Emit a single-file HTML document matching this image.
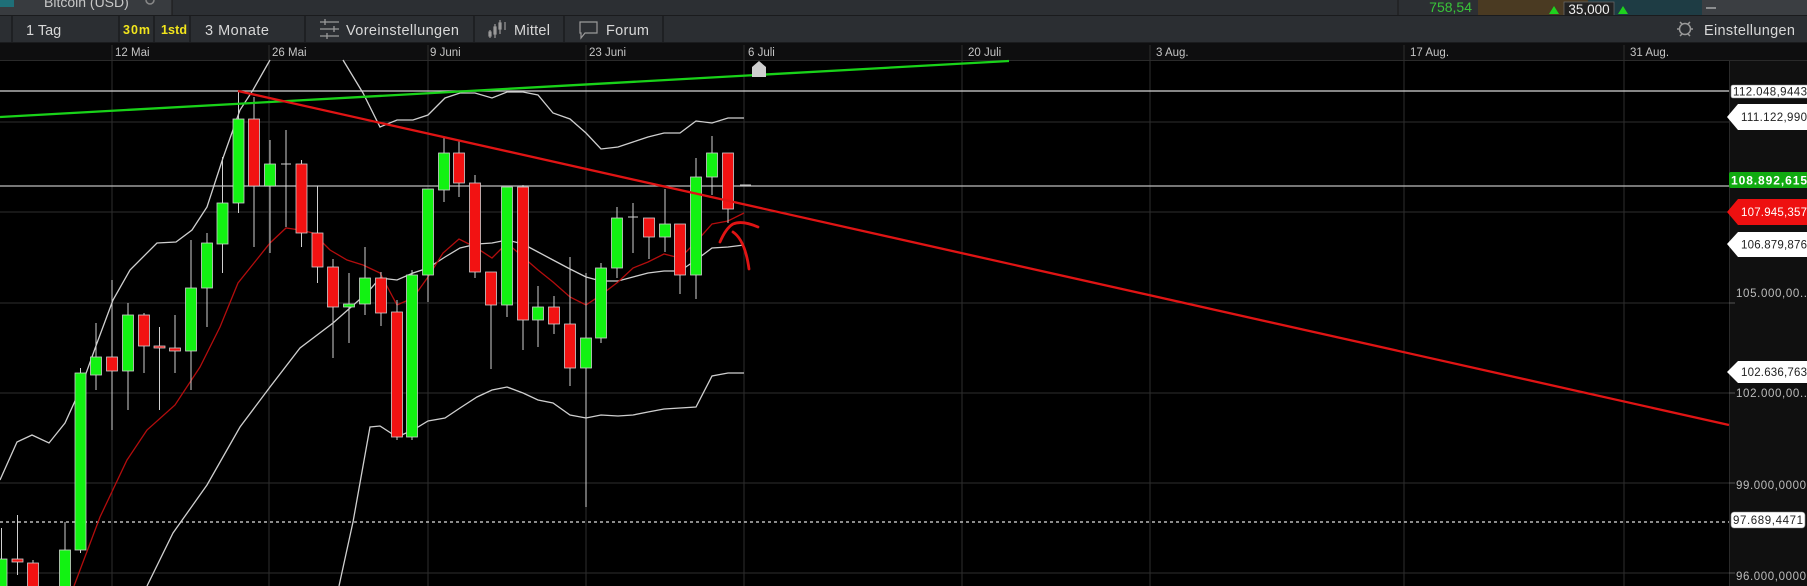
<!DOCTYPE html>
<html><head><meta charset="utf-8"><style>
html,body{margin:0;padding:0;background:#000;width:1807px;height:586px;overflow:hidden}
svg{display:block}
text{font-family:"Liberation Sans",sans-serif}
</style></head><body>
<svg width="1807" height="586" viewBox="0 0 1807 586" xmlns="http://www.w3.org/2000/svg">
<rect x="0" y="0" width="1807" height="586" fill="#000"/>
<rect x="0" y="0" width="1807" height="15" fill="#2c2f33"/>
<rect x="0" y="0" width="172" height="15" fill="#383b3f"/>
<rect x="0" y="0" width="14" height="7" fill="#1f6f78"/>
<text x="44" y="7" font-size="14" fill="#c8c8c8">Bitcoin (USD)</text>
<circle cx="150" cy="0" r="4" fill="none" stroke="#888" stroke-width="1.5"/>
<line x1="172" y1="0" x2="172" y2="15" stroke="#1a1a1a"/>
<line x1="1398" y1="0" x2="1398" y2="15" stroke="#1a1a1a"/>
<text x="1472" y="12" font-size="14" fill="#39c339" text-anchor="end">758,54</text>
<rect x="1478" y="0" width="110" height="15" fill="#4a3a22"/>
<rect x="1588" y="0" width="114" height="15" fill="#1e3c44"/>
<polygon points="1549,14 1554,6 1559,14" fill="#1fd11f"/>
<polygon points="1618,14 1623,6 1628,14" fill="#1fd11f"/>
<rect x="1564" y="2" width="50" height="14" fill="#222" stroke="#666" stroke-width="0.8"/>
<text x="1589" y="14" font-size="13.5" fill="#f0f0f0" text-anchor="middle">35,000</text>
<rect x="1702" y="0" width="105" height="15" fill="#3b3e42"/>
<line x1="1706" y1="8" x2="1716" y2="8" stroke="#ddd" stroke-width="1"/>
<rect x="0" y="15" width="1807" height="28" fill="#2b2e32"/>
<line x1="0" y1="15.5" x2="1807" y2="15.5" stroke="#1a1b1d"/>
<line x1="0" y1="42.5" x2="1807" y2="42.5" stroke="#1a1b1d"/>
<g stroke="#1b1c1e" stroke-width="1.5">
<line x1="12" y1="16" x2="12" y2="42"/><line x1="119" y1="16" x2="119" y2="42"/>
<line x1="154" y1="16" x2="154" y2="42"/><line x1="190" y1="16" x2="190" y2="42"/>
<line x1="305" y1="16" x2="305" y2="42"/><line x1="474" y1="16" x2="474" y2="42"/>
<line x1="564" y1="16" x2="564" y2="42"/><line x1="663" y1="16" x2="663" y2="42"/>
</g>
<text x="26" y="35" font-size="14.5" fill="#d8d8d8">1 Tag</text>
<text x="123" y="34" font-size="12.5" font-weight="bold" fill="#f2e51c" textLength="27">30m</text>
<text x="161" y="34" font-size="12.5" font-weight="bold" fill="#f2e51c" textLength="26">1std</text>
<text x="205" y="35" font-size="14.5" fill="#d8d8d8" textLength="64">3 Monate</text>
<g stroke="#9a9a9a" stroke-width="1.3">
<line x1="320" y1="22" x2="339" y2="22"/><line x1="320" y1="29" x2="339" y2="29"/><line x1="320" y1="36" x2="339" y2="36"/>
<line x1="325" y1="19" x2="325" y2="25"/><line x1="334" y1="26" x2="334" y2="32"/><line x1="327" y1="33" x2="327" y2="39"/>
</g>
<text x="346" y="35" font-size="14.5" fill="#d8d8d8" textLength="113">Voreinstellungen</text>
<g stroke="#9a9a9a" stroke-width="1.2" fill="none">
<line x1="490" y1="30" x2="490" y2="38"/><rect x="489" y="32" width="2" height="4"/>
<line x1="495" y1="24" x2="495" y2="38"/><rect x="494" y="27" width="2" height="7"/>
<line x1="500" y1="20" x2="500" y2="34"/><rect x="499" y="23" width="2" height="6"/>
<line x1="505" y1="22" x2="505" y2="30"/>
</g>
<text x="514" y="35" font-size="14.5" fill="#d8d8d8" textLength="36">Mittel</text>
<path d="M580 22 H597 V33 H585 L581 38 V33 H580 Z" fill="none" stroke="#9a9a9a" stroke-width="1.2"/>
<text x="606" y="35" font-size="14.5" fill="#d8d8d8" textLength="43">Forum</text>
<g stroke="#9a9a9a" stroke-width="1.5" fill="none">
<circle cx="1685" cy="29" r="5.5"/>
<line x1="1677" y1="29" x2="1679" y2="29"/><line x1="1691" y1="29" x2="1693" y2="29"/>
<line x1="1680" y1="22" x2="1682" y2="24"/><line x1="1690" y1="22" x2="1688" y2="24"/>
<line x1="1680" y1="36" x2="1682" y2="34"/><line x1="1690" y1="36" x2="1688" y2="34"/>
</g>
<text x="1704" y="35" font-size="14.5" fill="#d8d8d8" textLength="91">Einstellungen</text>
<rect x="0" y="43" width="1807" height="17" fill="#0e0e0f"/>
<line x1="0" y1="60.5" x2="1807" y2="60.5" stroke="#2a2a2a"/>
<g font-size="11.5" fill="#c4c4c4">
<text x="115" y="56">12 Mai</text><text x="272" y="56">26 Mai</text><text x="430" y="56">9 Juni</text>
<text x="589" y="56">23 Juni</text><text x="748" y="56">6 Juli</text><text x="968" y="56">20 Juli</text>
<text x="1156" y="56">3 Aug.</text><text x="1410" y="56">17 Aug.</text><text x="1630" y="56">31 Aug.</text>
</g>
<g stroke="#2e2e2e" stroke-width="1">
<line x1="112" y1="45" x2="112" y2="586"/><line x1="269" y1="45" x2="269" y2="586"/>
<line x1="428" y1="45" x2="428" y2="586"/><line x1="586" y1="45" x2="586" y2="586"/>
<line x1="744" y1="45" x2="744" y2="586"/><line x1="962" y1="45" x2="962" y2="586"/>
<line x1="1150" y1="45" x2="1150" y2="586"/><line x1="1404" y1="45" x2="1404" y2="586"/>
<line x1="1624" y1="45" x2="1624" y2="586"/>
<line x1="0" y1="122" x2="1729" y2="122"/><line x1="0" y1="212" x2="1729" y2="212"/>
<line x1="0" y1="303" x2="1729" y2="303"/><line x1="0" y1="393" x2="1729" y2="393"/>
<line x1="0" y1="483" x2="1729" y2="483"/><line x1="0" y1="573" x2="1729" y2="573"/>
</g>
<rect x="1729" y="61" width="78" height="525" fill="#101010"/>
<line x1="1729.5" y1="61" x2="1729.5" y2="586" stroke="#2a2a2a"/>
<line x1="0" y1="91" x2="1729" y2="91" stroke="#d6d6d6" stroke-width="1.3"/>
<line x1="0" y1="186" x2="1729" y2="186" stroke="#bdbdbd" stroke-width="1.2"/>
<line x1="0" y1="522" x2="1729" y2="522" stroke="#e0e0e0" stroke-width="1.2" stroke-dasharray="3,3"/>
<g fill="none" stroke-width="1.3">
<polyline stroke="#cfcfcf" points="0,480 17,442 32,435 49,443 65,423 80,390 97,343 113,300 130,270 157,243 176,242 192,230 207,207 223,158 240,110 253,90 270,60"/>
<polyline stroke="#cfcfcf" points="343,60 363,93 380,127 397,120 413,120 428,115 445,98 460,93 475,93 492,98 507,92 523,92 538,95 553,113 570,119 586,133 601,149 618,147 633,142 648,137 664,133 680,133 696,121 712,123 728,118 744,118"/>
<polyline stroke="#cfcfcf" points="147,586 173,533 207,485 240,427 270,387 300,348 333,323 367,293 380,278 397,280 413,273 428,268 445,257 460,248 477,244 492,243 507,240 523,244 538,252 553,260 570,269 586,277 601,281 618,281 633,277 648,273 664,271 680,271 696,260 712,248 728,247 744,245"/>
<polyline stroke="#cfcfcf" points="339,586 353,522 370,427 380,426 397,437 413,430 428,421 445,418 460,408 477,397 492,390 507,387 523,393 538,400 553,403 570,415 586,418 601,415 618,416 633,415 648,412 664,409 680,408 696,407 712,376 728,373 744,373"/>
<polyline stroke="#b30d0d" points="74,586 100,517 127,460 147,430 175,405 200,367 220,327 238,283 270,243 286,228 300,230 313,233 330,250 347,260 363,265 380,273 397,305 413,298 428,277 443,253 459,239 475,247 492,258 507,243 523,257 538,270 553,282 570,297 586,305 601,295 618,282 633,268 648,262 664,254 680,258 696,242 712,224 728,221 744,213"/>
</g>
<g stroke="#d0d0d0" stroke-width="1">
<line x1="1.5" y1="528" x2="1.5" y2="586"/><line x1="17.5" y1="515" x2="17.5" y2="575"/><line x1="33" y1="560" x2="33" y2="586"/>
<line x1="65" y1="522" x2="65" y2="586"/><line x1="80.5" y1="368" x2="80.5" y2="553"/><line x1="96" y1="323" x2="96" y2="390"/>
<line x1="112" y1="280" x2="112" y2="430"/><line x1="128" y1="303" x2="128" y2="410"/><line x1="144" y1="313" x2="144" y2="373"/>
<line x1="159.5" y1="327" x2="159.5" y2="410"/><line x1="175" y1="315" x2="175" y2="373"/><line x1="191" y1="240" x2="191" y2="390"/>
<line x1="207" y1="233" x2="207" y2="327"/><line x1="222.5" y1="157" x2="222.5" y2="273"/><line x1="238.5" y1="92" x2="238.5" y2="213"/>
<line x1="254" y1="97" x2="254" y2="247"/><line x1="270" y1="140" x2="270" y2="253"/><line x1="286" y1="130" x2="286" y2="227"/>
<line x1="301.5" y1="160" x2="301.5" y2="247"/><line x1="317.5" y1="186" x2="317.5" y2="283"/><line x1="333" y1="259" x2="333" y2="358"/>
<line x1="349" y1="273" x2="349" y2="343"/><line x1="365" y1="247" x2="365" y2="315"/><line x1="381" y1="272" x2="381" y2="326"/>
<line x1="397" y1="300" x2="397" y2="440"/><line x1="412" y1="270" x2="412" y2="440"/>
<line x1="428" y1="189" x2="428" y2="302"/><line x1="444" y1="137" x2="444" y2="202"/><line x1="459" y1="141" x2="459" y2="197"/>
<line x1="475" y1="175" x2="475" y2="278"/><line x1="491" y1="272" x2="491" y2="369"/><line x1="507" y1="187" x2="507" y2="317"/>
<line x1="523" y1="185" x2="523" y2="350"/><line x1="538" y1="286" x2="538" y2="347"/><line x1="554" y1="296" x2="554" y2="334"/>
<line x1="570" y1="257" x2="570" y2="386"/><line x1="586" y1="273" x2="586" y2="507"/><line x1="601" y1="263" x2="601" y2="343"/>
<line x1="617" y1="207" x2="617" y2="278"/><line x1="633" y1="203" x2="633" y2="253"/><line x1="649" y1="218" x2="649" y2="259"/>
<line x1="665" y1="189" x2="665" y2="252"/><line x1="680" y1="224" x2="680" y2="294"/><line x1="696" y1="158" x2="696" y2="299"/>
<line x1="712" y1="136" x2="712" y2="195"/><line x1="728" y1="153" x2="728" y2="223"/>
<line x1="740" y1="185" x2="751" y2="185"/>
<line x1="281" y1="164" x2="291" y2="164"/><line x1="628" y1="217" x2="638" y2="217"/>
</g>
<g stroke="#cfcfcf" stroke-width="0.8">
<rect x="-4" y="559" width="11" height="28" fill="#12f212"/>
<rect x="12" y="559" width="11" height="3" fill="#f21212"/>
<rect x="27.5" y="563" width="11" height="24" fill="#f21212"/>
<rect x="59.5" y="550" width="11" height="37" fill="#12f212"/>
<rect x="75" y="373" width="11" height="177" fill="#12f212"/>
<rect x="90.5" y="357" width="11" height="18" fill="#12f212"/>
<rect x="106.5" y="357" width="11" height="14" fill="#f21212"/>
<rect x="122.5" y="315" width="11" height="56" fill="#12f212"/>
<rect x="138.5" y="315" width="11" height="31" fill="#f21212"/>
<rect x="154" y="346" width="11" height="2" fill="#f21212"/>
<rect x="169.5" y="348" width="11" height="3" fill="#f21212"/>
<rect x="185.5" y="288" width="11" height="63" fill="#12f212"/>
<rect x="201.5" y="243" width="11" height="45" fill="#12f212"/>
<rect x="217" y="203" width="11" height="41" fill="#12f212"/>
<rect x="233" y="119" width="11" height="84" fill="#12f212"/>
<rect x="248.5" y="119" width="11" height="67" fill="#f21212"/>
<rect x="264.5" y="164" width="11" height="22" fill="#12f212"/>
<rect x="296" y="164" width="11" height="69" fill="#f21212"/>
<rect x="312" y="233" width="11" height="34" fill="#f21212"/>
<rect x="327.5" y="267" width="11" height="40" fill="#f21212"/>
<rect x="343.5" y="304" width="11" height="3" fill="#12f212"/>
<rect x="359.5" y="278" width="11" height="26" fill="#12f212"/>
<rect x="375.5" y="278" width="11" height="35" fill="#f21212"/>
<rect x="391.5" y="312" width="11" height="125" fill="#f21212"/>
<rect x="406.5" y="275" width="11" height="162" fill="#12f212"/>
<rect x="422.5" y="189" width="11" height="86" fill="#12f212"/>
<rect x="438.5" y="153" width="11" height="37" fill="#12f212"/>
<rect x="453.5" y="153" width="11" height="30" fill="#f21212"/>
<rect x="469.5" y="183" width="11" height="89" fill="#f21212"/>
<rect x="485.5" y="272" width="11" height="33" fill="#f21212"/>
<rect x="501.5" y="187" width="11" height="118" fill="#12f212"/>
<rect x="517.5" y="187" width="11" height="133" fill="#f21212"/>
<rect x="532.5" y="307" width="11" height="13" fill="#12f212"/>
<rect x="548.5" y="307" width="11" height="17" fill="#f21212"/>
<rect x="564.5" y="324" width="11" height="44" fill="#f21212"/>
<rect x="580.5" y="338" width="11" height="30" fill="#12f212"/>
<rect x="595.5" y="268" width="11" height="70" fill="#12f212"/>
<rect x="611.5" y="218" width="11" height="50" fill="#12f212"/>
<rect x="643.5" y="218" width="11" height="19" fill="#f21212"/>
<rect x="659.5" y="224" width="11" height="13" fill="#12f212"/>
<rect x="674.5" y="224" width="11" height="51" fill="#f21212"/>
<rect x="690.5" y="177" width="11" height="98" fill="#12f212"/>
<rect x="706.5" y="153" width="11" height="24" fill="#12f212"/>
<rect x="722.5" y="153" width="11" height="56" fill="#f21212"/>
</g>
<line x1="0" y1="117" x2="1009" y2="61" stroke="#19d219" stroke-width="2.3"/>
<line x1="238" y1="91" x2="1729" y2="425" stroke="#e01414" stroke-width="2.3"/>
<g fill="none" stroke="#e01414" stroke-width="2.8" stroke-linecap="round">
<path d="M720 242 Q726 228 733 224 Q742 220 758 227"/>
<path d="M733 232 Q745 240 749 269"/>
</g>
<path d="M752 77 V67 L759 61 L766 67 V77 Z" fill="#cfcfcf"/>
<g font-size="11.5" fill="#bdbdbd">
<line x1="1729" y1="303" x2="1735" y2="303" stroke="#555"/>
<line x1="1729" y1="393" x2="1735" y2="393" stroke="#555"/>
<line x1="1729" y1="483" x2="1735" y2="483" stroke="#555"/>
<line x1="1729" y1="573" x2="1735" y2="573" stroke="#555"/>
<text x="1736" y="297" textLength="71">105.000,00..</text>
<text x="1736" y="397" textLength="71">102.000,00..</text>
<text x="1736" y="489" textLength="70">99.000,0000</text>
<text x="1736" y="580" textLength="70">96.000,0000</text>
</g>
<rect x="1731" y="85" width="80" height="13" rx="2" fill="#fff" stroke="#888" stroke-width="0.6"/>
<text x="1733" y="95.5" font-size="11.5" fill="#222" textLength="74">112.048,9443</text>
<path d="M1727 117 L1738 104 H1807 V130 H1738 Z" fill="#fff"/>
<text x="1741" y="121" font-size="11.5" fill="#222" textLength="66">111.122,990</text>
<rect x="1729" y="172" width="80" height="16" rx="2" fill="#10aa10"/>
<text x="1731" y="184.5" font-size="12" font-weight="bold" fill="#fff" textLength="76">108.892,615</text>
<path d="M1727 212 L1738 199 H1807 V225 H1738 Z" fill="#ee1010"/>
<text x="1741" y="216" font-size="11.5" fill="#fff" textLength="66">107.945,357</text>
<path d="M1727 244 L1738 232 H1807 V257 H1738 Z" fill="#fff"/>
<text x="1741" y="248.5" font-size="11.5" fill="#222" textLength="66">106.879,876</text>
<path d="M1727 372 L1738 361 H1807 V383 H1738 Z" fill="#fff"/>
<text x="1741" y="376" font-size="11.5" fill="#222" textLength="66">102.636,763</text>
<rect x="1731" y="512" width="74" height="16" rx="3" fill="#fff" stroke="#888" stroke-width="0.6"/>
<text x="1733" y="524" font-size="11.5" fill="#222" textLength="70">97.689,4471</text>
</svg>
</body></html>
